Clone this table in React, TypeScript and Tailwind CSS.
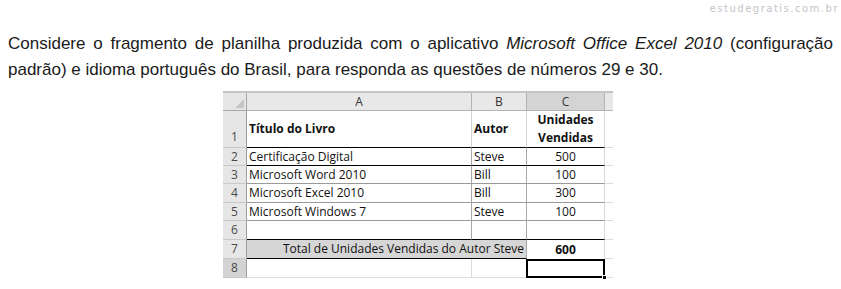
import React from 'react';

// Fragmento de planilha (Excel 2010) com enunciado acima
type Row = {
  n: string;
  a?: string;
  b?: string;
  c?: string;
  h: string;
  line: string;
};

const rows: Row[] = [
  { n: '2', a: 'Certificação Digital', b: 'Steve', c: '500', h: 'h-[18px]', line: 'border-b-black' },
  { n: '3', a: 'Microsoft Word 2010', b: 'Bill', c: '100', h: 'h-[18px]', line: 'border-b-[#9a9a9a]' },
  { n: '4', a: 'Microsoft Excel 2010', b: 'Bill', c: '300', h: 'h-[19px]', line: 'border-b-[#9a9a9a]' },
  { n: '5', a: 'Microsoft Windows 7', b: 'Steve', c: '100', h: 'h-[18px]', line: 'border-b-[#9a9a9a]' },
  { n: '6', h: 'h-[19px]', line: 'border-b-black' },
];

const RowLabel: React.FC<{ n: string; h: string; sel?: boolean; bottom?: boolean }> = ({ n, h, sel, bottom }) => (
  <div
    className={`${h} flex ${bottom ? 'items-end pb-[1px]' : 'items-center'} justify-center border-r border-b border-r-[#9e9e9e] border-b-[#c8c8c8] text-[12px] text-[#4a4a4a] ${sel ? 'bg-[#d3d3d3]' : 'bg-[#e6e6e6]'}`}
  >
    {n}
  </div>
);

export default function App() {
  return (
    <div className="w-[841px] h-[289px] bg-white relative overflow-hidden" style={{ fontFamily: '"Liberation Sans", Arial, sans-serif' }}>
      <div
        className="absolute top-[1px] right-[2px] text-[10px] tracking-[1.5px] text-[#c4c4cc]"
        style={{ fontFamily: '"DejaVu Sans", Verdana, sans-serif' }}
      >
        estudegratis.com.br
      </div>

      <p className="pt-[31px] px-2 text-[17px] leading-[26px] text-[#1a1a1a] text-justify [text-align-last:left]">
        Considere o fragmento de planilha produzida com o aplicativo <i>Microsoft Office Excel 2010</i> (configuração
        padrão) e idioma português do Brasil, para responda as questões de números 29 e 30.
      </p>

      <div
        className="ml-[223px] mt-[8px] w-[390px] border-t-2 border-t-[#c4c4c4] text-[12px] text-[#111]"
        style={{ fontFamily: '"Open Sans", "DejaVu Sans", sans-serif' }}
      >
        <div className="grid grid-cols-[24px_225px_55px_78px_8px]">
          {/* cabeçalho */}
          <div className="h-[18px] bg-[#e6e6e6] border-r border-b border-[#a8a8a8] relative">
            <div className="absolute right-[2px] bottom-[2px] w-0 h-0 border-l-[9px] border-l-transparent border-b-[9px] border-b-[#c6c6c6]" />
          </div>
          <div className="h-[18px] bg-[#e8e8e8] border-r border-b border-[#b4b4b4] flex items-center justify-center text-[#333]">A</div>
          <div className="h-[18px] bg-[#e8e8e8] border-r border-b border-[#b4b4b4] flex items-center justify-center text-[#333]">B</div>
          <div className="h-[18px] bg-[#d4d4d4] border-r border-b border-[#b4b4b4] flex items-center justify-center text-[#333]">C</div>
          <div className="h-[18px] bg-[#e8e8e8] border-b border-[#b4b4b4]" />

          {/* linha 1 */}
          <RowLabel n="1" h="h-[37px]" bottom />
          <div className="h-[37px] border-r border-r-[#d0d0d0] border-b border-b-black flex items-center pl-[2px] font-bold">Título do Livro</div>
          <div className="h-[37px] border-r border-r-[#d0d0d0] border-b border-b-black flex items-center pl-[2px] font-bold">Autor</div>
          <div className="h-[37px] border-r border-r-[#d8d8d8] border-b border-b-black flex flex-col items-center justify-center font-bold leading-[18px]">
            <span>Unidades</span>
            <span>Vendidas</span>
          </div>
          <div className="h-[37px] border-b border-b-[#dcdcdc]" />

          {rows.map((r) => (
            <React.Fragment key={r.n}>
              <RowLabel n={r.n} h={r.h} />
              <div className={`${r.h} border-r border-r-[#a8a8a8] border-b ${r.line} flex items-center pl-[2px]`}>{r.a}</div>
              <div className={`${r.h} border-r border-r-[#a8a8a8] border-b ${r.line} flex items-center pl-[2px]`}>{r.b}</div>
              <div className={`${r.h} border-r border-r-[#d8d8d8] border-b ${r.line} flex items-center justify-center`}>{r.c}</div>
              <div className={`${r.h} border-b border-b-[#dcdcdc]`} />
            </React.Fragment>
          ))}

          {/* linha 7: total */}
          <RowLabel n="7" h="h-[19px]" />
          <div className="col-span-2 h-[19px] bg-[#d6d6d6] border-r border-r-[#a8a8a8] border-b border-b-black flex items-center justify-end pr-[2px]">
            Total de Unidades Vendidas do Autor Steve
          </div>
          <div className="h-[19px] border-r border-r-[#d8d8d8] flex items-center justify-center font-bold">600</div>
          <div className="h-[19px] border-b border-b-[#dcdcdc]" />

          {/* linha 8 */}
          <RowLabel n="8" h="h-[19px]" sel />
          <div className="h-[19px] border-r border-r-[#dcdcdc] border-b border-b-[#dcdcdc]" />
          <div className="h-[19px] border-r border-r-[#dcdcdc] border-b border-b-[#dcdcdc]" />
          <div className="h-[19px] border-2 border-black -ml-px relative">
            <div className="absolute -right-[4px] -bottom-[4px] w-[5px] h-[5px] bg-black border border-white" />
          </div>
          <div className="h-[19px] border-b border-b-[#dcdcdc]" />
        </div>
      </div>
    </div>
  );
}
